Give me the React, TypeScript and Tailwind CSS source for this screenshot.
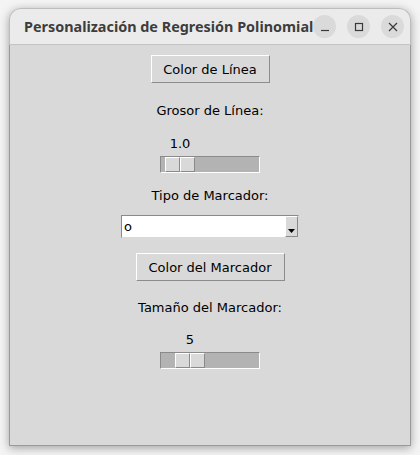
import React from "react";

const body = { fontFamily: '"DejaVu Sans", sans-serif' };

function TkButton({ label, width }: { label: string; width: string }) {
  return (
    <button
      className={`h-[28px] ${width} bg-[#d9d9d9] border border-t-white border-l-white border-r-[#8c8c8c] border-b-[#8c8c8c] text-[13px] text-black leading-none`}
    >
      {label}
    </button>
  );
}

function TkScale({ value, offset }: { value: string; offset: number }) {
  return (
    <div className="flex flex-col w-[100px]">
      <div className="w-[30px] text-center text-[13px] leading-[19px] text-black" style={{ marginLeft: offset }}>
        {value}
      </div>
      <div className="mt-[3px] h-[17px] bg-[#b3b3b3] border border-t-[#8a8a8a] border-l-[#8a8a8a] border-r-white border-b-white flex">
        <div className="flex h-full" style={{ marginLeft: offset - 1 }}>
          <div className="w-[15px] h-full bg-[#d9d9d9] border border-t-white border-l-white border-r-[#8a8a8a] border-b-[#8a8a8a]" />
          <div className="w-[15px] h-full bg-[#d9d9d9] border border-t-white border-l-white border-r-[#8a8a8a] border-b-[#8a8a8a]" />
        </div>
      </div>
    </div>
  );
}

function TitleButton({ children }: { children: React.ReactNode }) {
  return (
    <div className="w-[23px] h-[23px] rounded-full bg-[#dadada] flex items-center justify-center text-[#3a3a3a]">
      {children}
    </div>
  );
}

export default function App() {
  return (
    <div className="w-[420px] h-[455px] bg-[#f4f4f4] pt-[8px] pl-[9px]">
      <div className="w-[402px] h-[438px] flex flex-col rounded-t-[12px] shadow-[0_2px_10px_rgba(0,0,0,0.35)]">
        <div className="h-[37px] shrink-0 bg-[#ebebeb] rounded-t-[12px] border border-[#bdbdbd] border-b-[#c4c4c4] flex items-center pl-[14px] pr-[7px]">
          <span
            className="text-[14.4px] font-bold text-[#3d3d3d] whitespace-nowrap"
            style={{ fontFamily: '"Noto Sans", sans-serif' }}
          >
            Personalización de Regresión Polinomial
          </span>
          <div className="ml-auto flex items-center gap-[11px]">
            <TitleButton>
              <svg width="10" height="10" viewBox="0 0 10 10">
                <path d="M1 8.5h8" stroke="currentColor" strokeWidth="1.2" />
              </svg>
            </TitleButton>
            <TitleButton>
              <svg width="10" height="10" viewBox="0 0 10 10">
                <rect x="1.5" y="1.5" width="7" height="7" fill="none" stroke="currentColor" strokeWidth="1.2" />
              </svg>
            </TitleButton>
            <TitleButton>
              <svg width="10" height="10" viewBox="0 0 10 10">
                <path d="M1 1l8 8M9 1l-8 8" stroke="currentColor" strokeWidth="1.2" />
              </svg>
            </TitleButton>
          </div>
        </div>
        <div
          className="flex-1 bg-[#d9d9d9] border border-t-0 border-[#9a9a9a] flex flex-col items-center"
          style={body}
        >
          <div className="mt-[10px]">
            <TkButton label="Color de Línea" width="w-[119px]" />
          </div>
          <div className="mt-[18px] text-[13px] leading-[19px] text-black">Grosor de Línea:</div>
          <div className="mt-[14px]">
            <TkScale value="1.0" offset={5} />
          </div>
          <div className="mt-[13px] text-[13px] leading-[19px] text-black">Tipo de Marcador:</div>
          <div className="mt-[10px] w-[178px] h-[23px] bg-white border border-t-[#8a8a8a] border-l-[#8a8a8a] border-r-[#d9d9d9] border-b-[#d9d9d9] flex items-center">
            <span className="pl-[2px] text-[13px] text-black leading-none">o</span>
            <div className="ml-auto h-full w-[13px] bg-[#d9d9d9] border border-t-white border-l-white border-r-[#8a8a8a] border-b-[#8a8a8a] flex items-end justify-center pb-[3px]">
              <svg width="7" height="4" viewBox="0 0 7 4">
                <path d="M0 0h7L3.5 4z" fill="#000" />
              </svg>
            </div>
          </div>
          <div className="mt-[15px]">
            <TkButton label="Color del Marcador" width="w-[149px]" />
          </div>
          <div className="mt-[17px] text-[13px] leading-[19px] text-black">Tamaño del Marcador:</div>
          <div className="mt-[13px]">
            <TkScale value="5" offset={15} />
          </div>
        </div>
      </div>
    </div>
  );
}
